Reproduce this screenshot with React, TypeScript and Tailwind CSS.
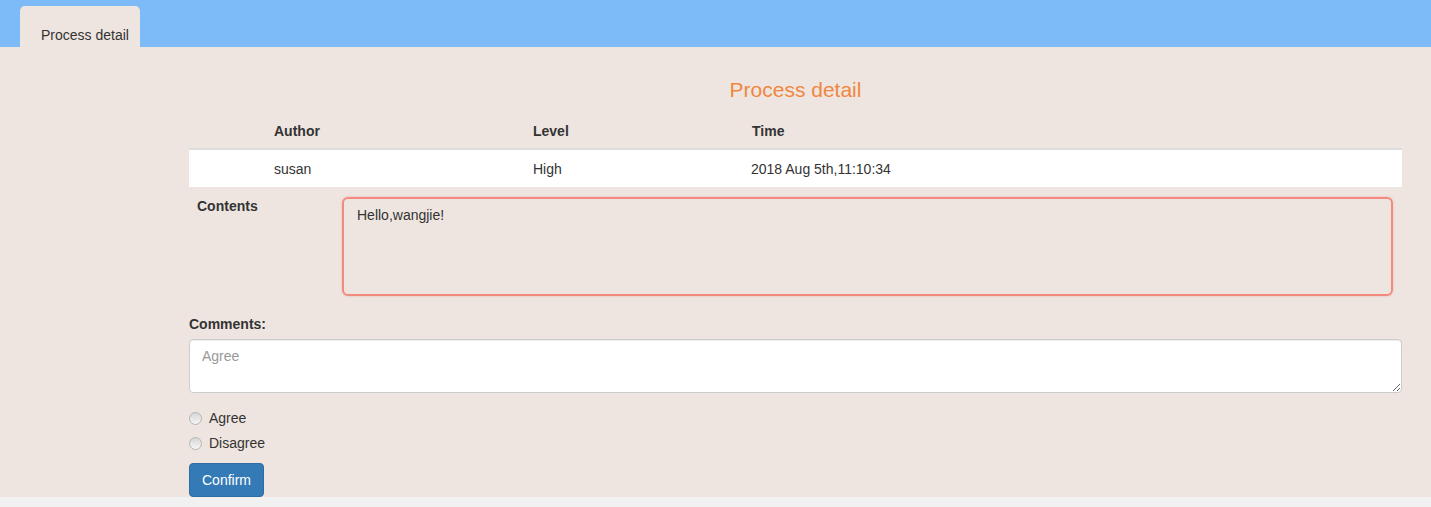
import React from "react";

const rows = [{ author: "susan", level: "High", time: "2018 Aug 5th,11:10:34" }];

function Radio({ label }: { label: string }) {
  return (
    <label className="flex h-[25px] items-center gap-[7px]">
      <span className="h-[13px] w-[13px] rounded-full border border-[#b5b5b5] bg-linear-to-b from-[#d6d6d6] to-[#f6f6f6]" />
      <span className="text-[14px] text-[#333]">{label}</span>
    </label>
  );
}

export default function App() {
  return (
    <div
      className="flex min-h-[507px] flex-col bg-[#f1f1f1] text-[14px] text-[#333]"
      style={{ fontFamily: '"Liberation Sans", Arial, sans-serif' }}
    >
      <div className="flex h-[47px] items-end bg-[#7cbbf8] pl-[20px]">
        <div className="flex h-[41px] w-[120px] items-end rounded-t-[5px] bg-[#eee5e0] pb-[2px] pl-[21px] text-[14px] leading-5 text-[#333]">
          Process detail
        </div>
      </div>

      <div className="bg-[#eee5e0] pl-[189px] pt-[28px]">
        <div className="flex w-[1213px] flex-col">
          <h3 className="text-center text-[21px] leading-[30px] text-[#f08741]">Process detail</h3>

          <table className="mt-[7px] w-full border-collapse text-left">
            <thead>
              <tr className="border-b-2 border-[#ddd]">
                <th className="w-[77px] pb-[7px] pt-[9px]" />
                <th className="w-[259px] px-2 pb-[7px] pt-[9px] font-bold leading-5">Author</th>
                <th className="w-[219px] px-2 pb-[7px] pt-[9px] font-bold leading-5">Level</th>
                <th className="px-2 pb-[7px] pt-[9px] font-bold leading-5">Time</th>
              </tr>
            </thead>
            <tbody>
              {rows.map((r) => (
                <tr key={r.author} className="bg-white">
                  <td className="pb-[7px] pt-[9px]" />
                  <td className="px-2 pb-[7px] pt-[9px] leading-[21px]">{r.author}</td>
                  <td className="px-2 pb-[7px] pt-[9px] leading-[21px]">{r.level}</td>
                  <td className="px-[7px] pb-[7px] pt-[9px] leading-[21px]">{r.time}</td>
                </tr>
              ))}
            </tbody>
          </table>

          <div className="mt-[10px] flex">
            <div className="w-[153px] pl-2 font-bold leading-[18px]">Contents</div>
            <div className="h-[99px] w-[1051px] rounded-[6px] border-2 border-[#f28b7e] px-[13px] py-[6px] leading-5 shadow-[0_0_2px_rgba(240,120,110,0.5)]">
              Hello,wangjie!
            </div>
          </div>

          <div className="mt-[18px] font-bold leading-5">Comments:</div>
          <textarea
            className="mt-[5px] h-[54px] w-full rounded-[4px] border border-[#ccc] bg-white px-3 py-[6px] text-[14px] leading-5 text-[#555] placeholder:text-[#999] shadow-[inset_0_1px_1px_rgba(0,0,0,0.075)] outline-none"
            placeholder="Agree"
          />

          <div className="mt-[13px] flex flex-col">
            <Radio label="Agree" />
            <Radio label="Disagree" />
          </div>

          <div className="mt-[7px]">
            <button className="h-[34px] w-[75px] rounded-[4px] border border-[#2e6da4] bg-[#337ab7] text-[14px] text-white">
              Confirm
            </button>
          </div>
        </div>
      </div>
    </div>
  );
}
